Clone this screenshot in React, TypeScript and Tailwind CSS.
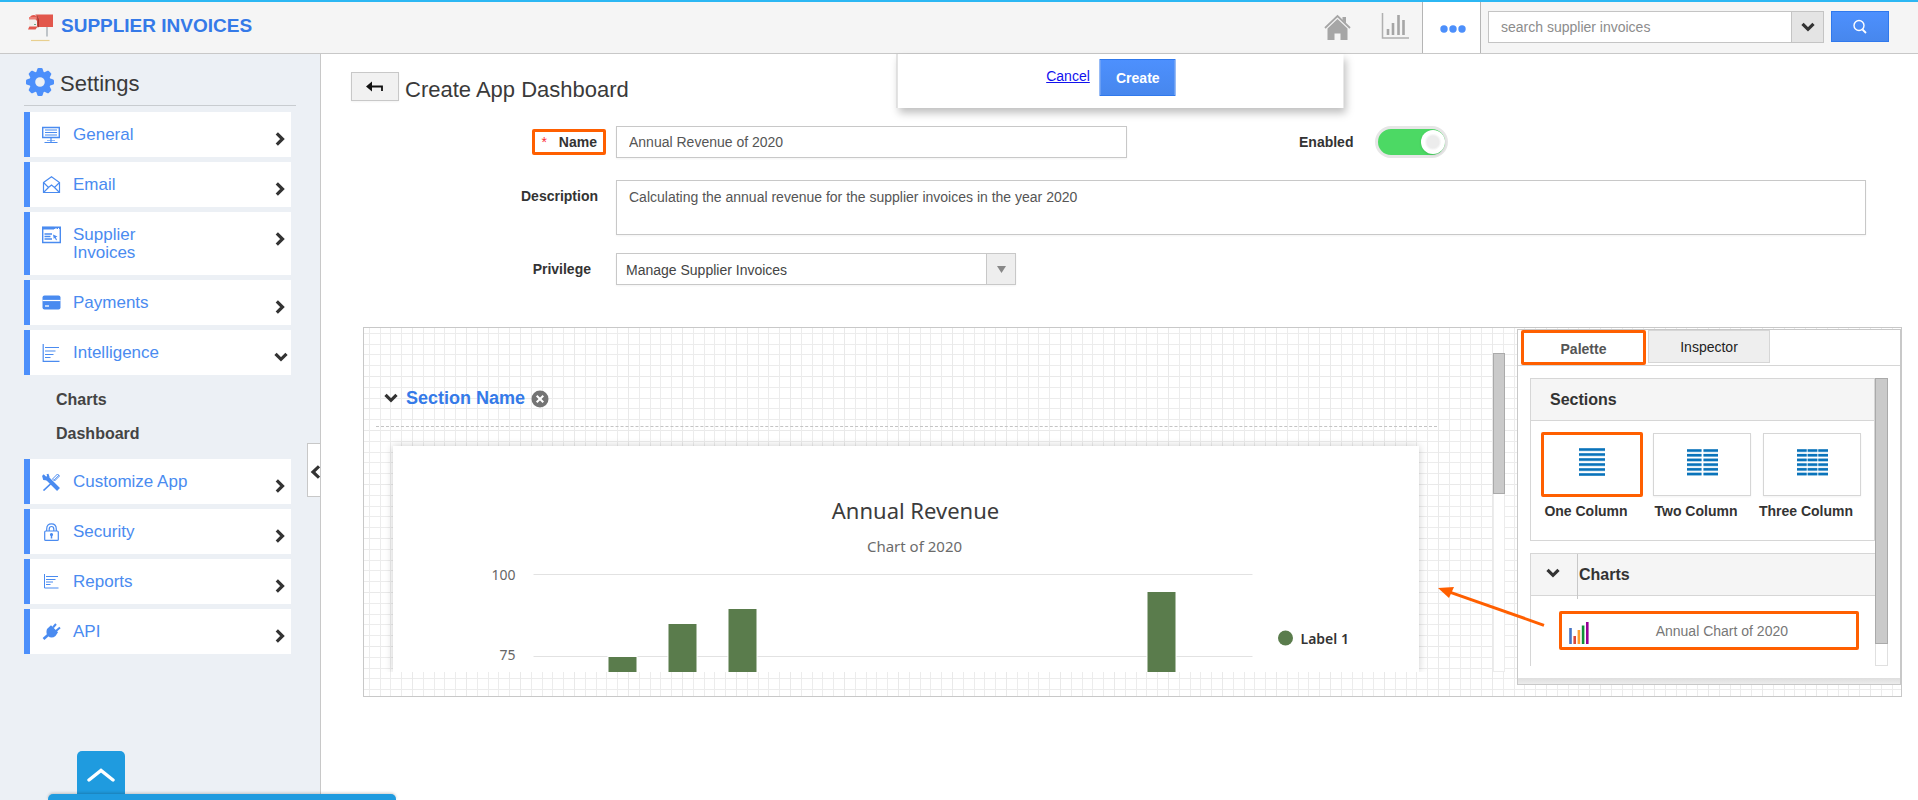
import React, { useState } from "react";

const BLUE = "#4a8bf0";

function MailboxIcon() {
  return (
    <svg width="28" height="30" viewBox="0 0 28 30" aria-hidden="true">
      <path d="M9 .5H25V13H11V6Q11 2 7 .5Z" fill="#e2574c" />
      <path d="M1.500 4Q2.500 1 6 1Q10 1.500 10 6V12L7.500 15.500H0L1.500 12Z" fill="#e2574c" />
      <path d="M1 4.500Q4 3.500 7 4.500L9 7V12.500H1Z" fill="#f1efec" />
      <path d="M1 3H8.500V5.500H1Z" fill="#ee8077" />
      <path d="M8 .8Q11 2.500 11 6V13L9.500 13.500V6Q9.500 3 8 .8Z" fill="#a8352c" />
      <path d="M6 10.500H8" stroke="#6aa88a" strokeWidth="1" />
      <path d="M19 13V22.500" stroke="#b9bfc4" strokeWidth="1.800" />
      <path d="M3 26.500H21.500" stroke="#e8cf8f" strokeWidth="1.200" />
    </svg>
  );
}

function GearIcon() {
  const teeth = [0, 45, 90, 135, 180, 225, 270, 315];
  return (
    <svg width="28" height="28" viewBox="-14 -14 28 28" fill="#4c8ffb" aria-hidden="true">
      <path
        fillRule="evenodd"
        d="M0-10.500A10.500 10.500 0 1 1 0 10.500A10.500 10.500 0 1 1 0-10.500ZM0-4.800A4.800 4.800 0 1 0 0 4.800A4.800 4.800 0 1 0 0-4.800Z"
      />
      {teeth.map((a) => (
        <path key={a} transform={`rotate(${a})`} d="M-4-9L-2.600-13.200Q-2.300-14-1.500-14H1.500Q2.300-14 2.600-13.200L4-9Z" />
      ))}
    </svg>
  );
}

function Chevron({ className = "" }: { className?: string }) {
  return (
    <svg width="14" height="10" viewBox="0 0 14 10" className={className} aria-hidden="true">
      <path d="M1.500 1.800L7 7.300L12.500 1.800" fill="none" stroke="#333" strokeWidth="3.200" />
    </svg>
  );
}

function ChevronRight() {
  return (
    <svg width="10" height="14" viewBox="0 0 10 14" aria-hidden="true">
      <path d="M1.800 1.300L7.500 7L1.800 12.700" fill="none" stroke="#333" strokeWidth="3.200" />
    </svg>
  );
}

const icons: Record<string, React.ReactNode> = {
  monitor: (
    <g fill="none" stroke={BLUE}>
      <path d="M.7 1.500H17.300V11.500H.7Z" strokeWidth="1.400" />
      <path d="M3 4H15M3 6.500H15M3 9H15" strokeWidth="1.200" />
      <path d="M9 12V16M2.500 16.500H15.500" strokeWidth="1.200" />
      <path d="M5 14.500H13" strokeWidth=".6" />
    </g>
  ),
  mail: (
    <g fill="none" stroke={BLUE} strokeWidth="1.200">
      <path d="M1.500 6.500L9.500.8L17.500 6.500V16.500H1.500Z" />
      <path d="M1.500 6.500L6.500 11.500L9.500 9L12.500 11.500L17.500 6.500M1.500 16.500L6.500 11.500M17.500 16.500L12.500 11.500" />
    </g>
  ),
  window: (
    <g fill="none" stroke={BLUE}>
      <path d="M.7 1.200H18.300V16.500H.7Z" strokeWidth="1.400" />
      <path d="M0 2.200H12" strokeWidth="2.600" />
      <path d="M12 2.200H18" strokeWidth="1.800" strokeDasharray="1.500 1" />
      <path d="M2.500 8H10M2.500 10.500H8.500M2.500 13H10" strokeWidth="1.300" />
      <path d="M11 8.500L15.500 10.500L13.800 11.200L15 14L14 14.300L12.800 11.800L11.800 13Z" fill={BLUE} stroke="none" />
    </g>
  ),
  card: (
    <g>
      <rect x=".5" y="1.500" width="18" height="14" rx="2" fill={BLUE} />
      <path d="M.5 6.500H18.500" stroke="#fff" strokeWidth="1.200" />
      <path d="M3 12H7" stroke="#fff" strokeWidth="1.300" />
    </g>
  ),
  bars: (
    <g fill="none" stroke={BLUE} strokeWidth="1.200">
      <path d="M1.200 0V17.400H17.500" />
      <path d="M3 3.500H17M3 7H13.500M3 10.500H11.500M3 13.500H8.500" />
    </g>
  ),
  report: (
    <g fill="none" stroke={BLUE} strokeWidth="1">
      <path d="M2.500 1V15H16.500" />
      <path d="M4 3.500H16M4 6.500H13.500M4 9H11M4 11.500H8.500" />
    </g>
  ),
  tools: (
    <g fill="none" stroke={BLUE}>
      <path d="M4 4L16.500 16.500" strokeWidth="4" />
      <path d="M1 2L4 5M1 2.500L2 6L5 6.500L6.500 4L5.500 1" strokeWidth="2" />
      <path d="M1.500 17.500L9 10.500" strokeWidth="1.700" />
      <path d="M10.500 6L15.500 1L17.500 3L12.500 8Z" strokeWidth="1" />
      <path d="M12 7L17 2" strokeWidth=".8" />
    </g>
  ),
  lock: (
    <g fill="none" stroke={BLUE} strokeWidth="1.200">
      <rect x="2.700" y="8" width="13.600" height="9.400" rx="1" />
      <path d="M4.700 8V6Q4.700.8 9.500.8T14.300 6V8M7.200 8V6Q7.200 3.500 9.500 3.500T11.800 6V8" />
      <circle cx="9.500" cy="11.500" r="1" fill={BLUE} />
      <path d="M9.500 12V15.500" strokeWidth="1.500" />
    </g>
  ),
  plug: (
    <g fill="none" stroke={BLUE}>
      <path d="M1.500 16L6 12" strokeWidth="2.600" />
      <path d="M5 6L9 2.300L16 9.200L13.500 13Q9.500 16 6 13Q3.500 10.500 5 6Z" fill={BLUE} stroke="none" />
      <path d="M11 4.500L14 1M14 8L18 4.500" strokeWidth="2" />
    </g>
  ),
};

function NavIcon({ name }: { name: string }) {
  return (
    <svg width="19" height="18" viewBox="0 0 19 18" className="shrink-0" aria-hidden="true">
      {icons[name]}
    </svg>
  );
}

function NavItem({ icon, label, open = false }: { icon: string; label: string; open?: boolean }) {
  return (
    <a
      href="#"
      className="flex items-start border-l-[6px] border-[#4c8ffb] bg-white pt-[14px] pb-3 pr-[6px] pl-3 text-[17px] leading-[18px] text-[#4a8bf0]"
    >
      <NavIcon name={icon} />
      <span className="ml-3 max-w-[120px] pb-px">{label}</span>
      <span className="ml-auto flex h-[19px] items-center pt-[6px]">
        {open ? <Chevron className="-mr-[3px]" /> : <ChevronRight />}
      </span>
    </a>
  );
}

function Sidebar() {
  return (
    <aside className="relative w-[321px] shrink-0 border-r border-[#c8c8c8] bg-[#ecf0f5] pl-6">
      <div className="mr-6 flex h-[52px] items-center gap-[6px] border-b border-[#c8ccd0] pt-1 pl-[2px]">
        <GearIcon />
        <h2 className="pt-1 text-[22px] leading-6 text-[#3a3a3a]">Settings</h2>
      </div>
      <nav className="mt-[6px] mr-[29px] flex flex-col gap-[5px]">
        <NavItem icon="monitor" label="General" />
        <NavItem icon="mail" label="Email" />
        <NavItem icon="window" label="Supplier Invoices" />
        <NavItem icon="card" label="Payments" />
        <NavItem icon="bars" label="Intelligence" open />
        <div className="flex h-[74px] flex-col gap-[14px] pt-[10px] pl-8 text-base leading-5 font-bold text-[#444]">
          <a href="#">Charts</a>
          <a href="#">Dashboard</a>
        </div>
        <NavItem icon="tools" label="Customize App" />
        <NavItem icon="lock" label="Security" />
        <NavItem icon="report" label="Reports" />
        <NavItem icon="plug" label="API" />
      </nav>
      <button
        aria-label="Collapse sidebar"
        className="absolute top-[389px] right-0 flex h-[54px] w-[13px] items-center justify-end border border-r-0 border-[#c8c8c8] bg-white pt-1"
      >
        <svg width="10" height="14" viewBox="0 0 10 14" aria-hidden="true">
          <path d="M9 1.300L3 7L9 12.700" fill="none" stroke="#333" strokeWidth="3.200" />
        </svg>
      </button>
    </aside>
  );
}

function Header() {
  return (
    <header className="flex h-[54px] border-t-2 border-b border-t-[#2cb7f3] border-b-[#c8c8c8] bg-[#f5f5f5]">
      <div className="flex items-start gap-[5px] pt-3 pl-7">
        <MailboxIcon />
        <h1 className="pt-px text-[19px] leading-[22px] font-bold text-[#357ae8]">SUPPLIER INVOICES</h1>
      </div>
      <div className="ml-auto flex">
        <a href="#" aria-label="Home" className="mt-3 mr-[30px]">
          <svg width="27" height="27" viewBox="0 0 27 27" aria-hidden="true">
            <path d="M1 14L13.500 2L26 14" fill="none" stroke="#a6a6a6" strokeWidth="1.800" />
            <path d="M18.500 3H22V9.500L18.500 6Z" fill="#a6a6a6" />
            <path d="M3.500 14.500L13.500 5L23.500 14.500V26H16.500V19.500H10.500V26H3.500Z" fill="#a6a6a6" />
          </svg>
        </a>
        <a href="#" aria-label="Charts" className="mt-[10px] mr-[13px]">
          <svg width="28" height="28" viewBox="0 0 28 28" aria-hidden="true">
            <path d="M1.500 1V26H28" fill="none" stroke="#b0b0b0" strokeWidth="1.500" />
            <path d="M7 17V23M12 11V23M17.500 3V23M22.500 8V23" stroke="#a6a6a6" strokeWidth="2.600" />
          </svg>
        </a>
        <button aria-label="More" className="flex w-[59px] items-center justify-center border-x border-[#b5b5b5] bg-white pt-[2px] pl-[2px]">
          <svg width="26" height="8" viewBox="0 0 26 8" fill="#4c8ffb" aria-hidden="true">
            <circle cx="4" cy="4" r="3.700" />
            <circle cx="13" cy="4" r="3.700" />
            <circle cx="22" cy="4" r="3.700" />
          </svg>
        </button>
        <div className="mt-[9px] ml-[7px] flex h-8 w-[336px] border border-[#c4c4c4] bg-white">
          <input
            aria-label="Search supplier invoices"
            placeholder="search supplier invoices"
            className="min-w-0 flex-1 bg-transparent px-3 text-sm text-[#555] outline-none placeholder:text-[#8c8c8c]"
          />
          <button aria-label="Search options" className="flex w-8 items-center justify-center border-l border-[#c4c4c4] bg-[#e4e4e4]">
            <Chevron />
          </button>
        </div>
        <button
          aria-label="Search"
          className="mt-[9px] mr-[29px] ml-[7px] flex h-[31px] w-[58px] items-center justify-center border border-[#3079ed] bg-linear-to-b from-[#4d90fe] to-[#4787ed]"
        >
          <svg width="16" height="16" viewBox="0 0 16 16" fill="none" stroke="#fff" aria-hidden="true">
            <circle cx="7" cy="6.500" r="5" strokeWidth="1.400" />
            <path d="M10.500 10.500L14 14" strokeWidth="1.800" />
          </svg>
        </button>
      </div>
    </header>
  );
}

const bars = [
  { x: 215, y: 211 },
  { x: 275, y: 178 },
  { x: 335, y: 163 },
  { x: 754, y: 146 },
];

function RevenueChart() {
  return (
    <svg
      viewBox="0 0 1025 226"
      preserveAspectRatio="xMidYMin meet"
      className="block h-[226px] w-full font-['Noto_Sans',sans-serif]"
      role="img"
      aria-label="Annual Revenue"
    >
      <text x="522" y="73" textAnchor="middle" fontSize="22" fill="#3c3c3c">Annual Revenue</text>
      <text x="521" y="106" textAnchor="middle" fontSize="15" fill="#6b6b6b">Chart of 2020</text>
      <text x="122" y="134" textAnchor="end" fontSize="14" fill="#666">100</text>
      <text x="122" y="214" textAnchor="end" fontSize="14" fill="#666">75</text>
      <path d="M140 128.500H859M140 210.500H859" stroke="#e2e2e2" />
      {bars.map((b) => (
        <g key={b.x}>
          <rect x={b.x - 1} y={b.y - 1} width="30" height="90" fill="#fff" />
          <rect x={b.x} y={b.y} width="28" height="90" fill="#5a7c4c" />
        </g>
      ))}
      <circle cx="892" cy="192" r="7.500" fill="#5a7c4c" />
      <text x="907" y="198" fontSize="14" fontWeight="600" fill="#333">Label 1</text>
    </svg>
  );
}

function ColumnsIcon({ columns }: { columns: number }) {
  const width = columns === 1 ? 26 : 31;
  const gap = columns === 2 ? 2 : 1;
  const cell = (width - gap * (columns - 1)) / columns;
  const pitch = columns === 1 ? 5 : 4.7;
  return (
    <svg width={width} height="28" viewBox={`0 0 ${width} 28`} fill="#0a74bb" aria-hidden="true">
      {[0, 1, 2, 3, 4, 5].map((r) =>
        Array.from({ length: columns }, (_, c) => (
          <g key={`${r}-${c}`}>
            <rect x={c * (cell + gap)} y={r * pitch + 0.3} width={cell} height="2.400" />
            <rect x={c * (cell + gap)} y={r * pitch} width={cell} height="3.300" opacity="0.35" />
          </g>
        )),
      )}
    </svg>
  );
}

const tiles = ["One Column", "Two Column", "Three Column"];

function Palette() {
  const [selected, setSelected] = useState(0);
  return (
    <section className="mt-px mb-[11px] flex w-[384px] shrink-0 flex-col border border-[#c8c8c8] bg-white">
      <div role="tablist" className="flex h-[36px] items-start gap-[2px] border-b border-[#d6d6d6] pl-[3px]">
        <button
          role="tab"
          aria-selected="true"
          className="h-[35px] w-[125px] rounded-[2px] border-[3px] border-[#ff5f00] bg-white pt-[2px] text-sm font-bold text-[#555]"
        >
          Palette
        </button>
        <button role="tab" aria-selected="false" className="h-[33px] w-[122px] border border-[#d6d6d6] bg-[#eee] text-sm text-[#222]">
          Inspector
        </button>
      </div>
      <div className="mt-3 mr-3 ml-3 flex">
        <div className="min-w-0 flex-1">
          <div className="h-[163px] border border-[#d6d6d6]">
            <h3 className="h-[42px] border-b border-[#d6d6d6] bg-[#f5f5f5] pl-[19px] text-base leading-[41px] font-bold text-[#333]">
              Sections
            </h3>
            <div className="mt-[11px] flex gap-2 pl-[10px]">
              {tiles.map((t, i) => (
                <button key={t} onClick={() => setSelected(i)} className="flex w-[102px] flex-col items-center text-sm font-bold text-[#333]">
                  <span
                    className={
                      i === selected
                        ? "flex h-[65px] w-full items-center justify-center rounded-[2px] border-[3px] border-[#ff5f00] pb-[5px]"
                        : "my-px flex h-[63px] w-[98px] items-center justify-center border border-[#d6d6d6] pb-1 shadow-xs"
                    }
                  >
                    <ColumnsIcon columns={i + 1} />
                  </span>
                  <span className="mt-1 -ml-3 leading-5 whitespace-nowrap">{t}</span>
                </button>
              ))}
            </div>
          </div>
          <div className="mt-3 h-[113px] border border-r-0 border-b-0 border-[#d6d6d6]">
            <div className="flex h-[42px] border-b border-[#d6d6d6] bg-[#f5f5f5]">
              <button aria-label="Toggle charts" className="flex h-[45px] w-[47px] items-center justify-center border-r border-[#c8c8c8] pr-[2px] pb-2">
                <Chevron />
              </button>
              <h3 className="pl-px text-base leading-[41px] font-bold text-[#333]">Charts</h3>
            </div>
            <button className="mt-[15px] ml-7 flex h-[39px] w-[300px] items-center rounded-[2px] border-[3px] border-[#ff5f00] bg-white pr-[68px] pl-[7px] text-sm text-[#777]">
              <svg width="20" height="22" viewBox="0 0 20 22" className="mt-1" aria-hidden="true">
                <path d="M1.500 6V22" stroke="#4573c4" strokeWidth="2.600" />
                <path d="M5.700 14V22" stroke="#dc4a38" strokeWidth="2.600" />
                <path d="M9.900 8V22" stroke="#ff9c2e" strokeWidth="2.600" />
                <path d="M14.100 3.500V22" stroke="#109038" strokeWidth="2.600" />
                <path d="M18.300 0V22" stroke="#960096" strokeWidth="2.600" />
              </svg>
              <span className="flex-1 text-right">Annual Chart of 2020</span>
            </button>
          </div>
        </div>
        <div className="w-[13px] border border-[#e0e0e0]">
          <div className="-mx-px -mt-px h-[266px] border border-[#aaa] bg-[#cacaca]" />
        </div>
      </div>
      <div className="mt-auto h-[6px] bg-linear-to-b from-[#dedede] to-[#ececec]" />
    </section>
  );
}

function Canvas() {
  return (
    <div className="relative mt-[42px] mr-4 ml-[42px] flex h-[370px] border border-[#c8c8c8] bg-[linear-gradient(90deg,#e9e9e9_1px,transparent_1px_11px,#ececec_11px_12px,transparent_12px_22px,#ececec_22px_23px,transparent_23px_32px,#ececec_32px_33px,transparent_33px_43px,#ececec_43px_44px,transparent_44px),linear-gradient(180deg,#e9e9e9_1px,transparent_1px_11px,#ececec_11px_12px,transparent_12px_22px,#ececec_22px_23px,transparent_23px_32px,#ececec_32px_33px,transparent_33px_43px,#ececec_43px_44px,transparent_44px)] bg-[size:54px_54px] bg-[position:48px_48px]">
      <div className="mb-6 min-w-0 flex-1 overflow-hidden pl-3">
        <div className="mt-[58px] mr-14 flex h-[41px] items-start gap-2 border-b border-dashed border-[#c4c4c4] pl-2">
          <button aria-label="Toggle section" className="mt-[7px]">
            <Chevron />
          </button>
          <h3 className="text-lg leading-6 font-bold text-[#357ae8]">Section Name</h3>
          <button aria-label="Remove section" className="-ml-[2px] pt-1">
            <svg width="18" height="18" viewBox="0 0 18 18" aria-hidden="true">
              <circle cx="9" cy="9" r="8.500" fill="#747474" />
              <path d="M5.700 5.700L12.300 12.300M12.300 5.700L5.700 12.300" stroke="#fff" strokeWidth="2" />
            </svg>
          </button>
        </div>
        <div className="mt-[19px] mr-[74px] ml-[17px] bg-white shadow-[0_0_8px_rgba(0,0,0,0.2)]">
          <RevenueChart />
        </div>
      </div>
      <div className="mt-[25px] mr-3 mb-6 w-3 border border-[#ececec] bg-white">
        <div className="-mx-px -mt-px h-[141px] border border-[#aaa] bg-[#cacaca]" />
      </div>
      <Palette />
      <svg width="110" height="46" viewBox="0 0 110 46" className="pointer-events-none absolute top-[255px] right-[354px]" aria-hidden="true">
        <path d="M12 8.800L107 42.300" stroke="#ff5f00" strokeWidth="3" />
        <path d="M1 5L17 4L12 15Z" fill="#ff5f00" />
      </svg>
    </div>
  );
}

function DashboardForm() {
  return (
    <form className="pt-[25px] text-sm text-[#555]" onSubmit={(e) => e.preventDefault()}>
      <div className="flex items-center">
        <div className="flex w-[295px] shrink-0 justify-end pr-[10px]">
          <label
            htmlFor="name"
            className="flex h-[26px] items-center gap-3 rounded-[2px] border-[3px] border-[#ff5f00] px-[6px] font-bold text-[#333]"
          >
            <span className="font-normal text-red-500">*</span>Name
          </label>
        </div>
        <input id="name" defaultValue="Annual Revenue of 2020" className="h-8 w-[511px] border border-[#c8c8c8] px-3 shadow-xs outline-none" />
        <label htmlFor="enabled" className="ml-[172px] font-bold text-[#333]">
          Enabled
        </label>
        <input
          id="enabled"
          type="checkbox"
          defaultChecked
          className="relative ml-[22px] h-8 w-[73px] appearance-none rounded-full border-[3px] border-[#e6e6e6] bg-white before:absolute before:top-px before:right-0 before:size-6 before:rounded-full before:bg-[radial-gradient(circle,#ececec_35%,#fff_50%)] before:shadow-sm checked:bg-[#4cd964]"
        />
      </div>
      <div className="mt-[22px] flex items-start">
        <label htmlFor="description" className="w-[295px] shrink-0 pt-[6px] pr-[18px] text-right leading-5 font-bold text-[#333]">
          Description
        </label>
        <textarea
          id="description"
          defaultValue="Calculating the annual revenue for the supplier invoices in the year 2020"
          className="mr-[52px] h-[55px] min-w-0 flex-1 resize-none border border-[#c8c8c8] px-3 py-[6px] leading-5 shadow-xs outline-none"
        />
      </div>
      <div className="mt-[18px] flex items-center">
        <label htmlFor="privilege" className="w-[295px] shrink-0 pr-[25px] text-right font-bold text-[#333]">
          Privilege
        </label>
        <div className="relative h-8 w-[400px] border border-[#c8c8c8] shadow-xs">
          <select id="privilege" className="h-full w-full appearance-none bg-white px-[9px] pt-[2px] text-[#444] outline-none">
            <option>Manage Supplier Invoices</option>
          </select>
          <span className="pointer-events-none absolute inset-y-0 right-0 flex w-[29px] items-center justify-center border-l border-[#c8c8c8] bg-[#eee] pt-px">
            <svg width="9" height="7" viewBox="0 0 9 7" aria-hidden="true">
              <path d="M0 0H9L4.500 7Z" fill="#888" />
            </svg>
          </span>
        </div>
      </div>
    </form>
  );
}

export default function App() {
  return (
    <div className="flex min-h-screen flex-col bg-white font-['Liberation_Sans',Arial,sans-serif]">
      <Header />
      <div className="flex flex-1">
        <Sidebar />
        <main className="relative min-w-0 flex-1">
          <div className="absolute top-0 left-1/2 flex h-[54px] w-[447px] -translate-x-1/2 items-start justify-center gap-[10px] border-l border-[#c8c8c8] bg-white pt-[5px] pr-[18px] shadow-[2px_5px_8px_rgba(0,0,0,0.25)]">
            <a href="#" className="pt-[7px] text-sm leading-5 text-[#1111ee] underline">
              Cancel
            </a>
            <button className="h-[37px] w-[76px] border border-[#3079ed] bg-linear-to-b from-[#4d90fe] to-[#4787ed] text-sm font-bold text-white">
              Create
            </button>
          </div>
          <div className="flex h-[47px] items-start gap-[6px] pt-[18px] pl-[30px]">
            <button aria-label="Back" className="flex h-[29px] w-12 items-center justify-center border border-[#c8c8c8] bg-[#f1f1f1] shadow-xs">
              <svg width="18" height="12" viewBox="0 0 18 12" aria-hidden="true">
                <path d="M0 5.500L6 .5V10.500Z" fill="#111" />
                <path d="M5 5.500H16V10" fill="none" stroke="#111" strokeWidth="1.800" />
              </svg>
            </button>
            <h2 className="pt-[6px] text-[22px] leading-6 text-[#3a3a3a]">Create App Dashboard</h2>
          </div>
          <DashboardForm />
          <Canvas />
        </main>
      </div>
      <div className="fixed bottom-0 left-12 w-[348px]">
        <button aria-label="Open tray" className="ml-[29px] flex h-[43px] w-12 items-center justify-center rounded-t-[5px] bg-[#1f9bdf] pt-[5px]">
          <svg width="28" height="14" viewBox="0 0 28 14" aria-hidden="true">
            <path d="M2 12L14 2.500L26 12" fill="none" stroke="#fff" strokeWidth="3.400" strokeLinecap="round" />
          </svg>
        </button>
        <div className="h-[6px] rounded-t-[5px] bg-[#1f9bdf] shadow-[0_-1px_3px_rgba(0,0,0,0.2)]" />
      </div>
    </div>
  );
}
